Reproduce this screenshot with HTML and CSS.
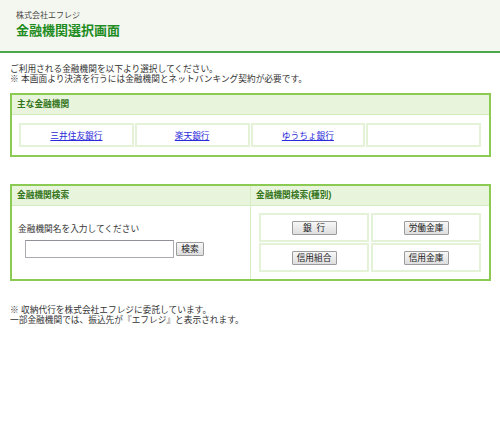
FILE: index.html
```html
<!DOCTYPE html>
<html lang="ja">
<head>
<meta charset="utf-8">
<title>金融機関選択画面</title>
<link rel="stylesheet" href="styles.css">
</head>
<body>
<div class="header">
  <div class="company">株式会社エフレジ</div>
  <h1 class="title">金融機関選択画面</h1>
</div>
<div class="content">
  <p class="intro">ご利用される金融機関を以下より選択してください。<br>※ 本画面より決済を行うには金融機関とネットバンキング契約が必要です。</p>

  <div class="panel panel-main">
    <div class="panel-head">主な金融機関</div>
    <div class="bank-grid">
      <div class="cell"><a href="#">三井住友銀行</a></div>
      <div class="cell"><a href="#">楽天銀行</a></div>
      <div class="cell"><a href="#">ゆうちょ銀行</a></div>
      <div class="cell"></div>
    </div>
  </div>

  <div class="panel panel-search">
    <div class="col col-left">
      <div class="panel-head">金融機関検索</div>
      <div class="search-body">
        <div class="label">金融機関名を入力してください</div>
        <div class="search-row">
          <input class="search-input" type="text">
          <button class="btn btn-search">検索</button>
        </div>
      </div>
    </div>
    <div class="col col-right">
      <div class="panel-head">金融機関検索(種別)</div>
      <div class="type-grid">
        <div class="cell cell-type"><button class="btn btn-type">銀&nbsp;&nbsp;行</button></div>
        <div class="cell cell-type"><button class="btn btn-type">労働金庫</button></div>
        <div class="cell cell-type"><button class="btn btn-type">信用組合</button></div>
        <div class="cell cell-type"><button class="btn btn-type">信用金庫</button></div>
      </div>
    </div>
  </div>

  <p class="note">※ 収納代行を株式会社エフレジに委託しています。<br>一部金融機関では、振込先が『エフレジ』と表示されます。</p>
</div>
</body>
</html>
```

FILE: styles.css
```css
* { box-sizing: border-box; }
body {
  margin: 0;
  background: #ffffff;
  font-family: "Liberation Sans", "Noto Sans CJK JP", sans-serif;
  font-size: 8.7px;
  color: #333333;
}
.header {
  height: 53px;
  background: #f4f7ef;
  border-bottom: 2px solid #4aa84a;
  padding: 10px 0 0 16px;
}
.company {
  font-size: 8px;
  line-height: 11px;
  color: #444444;
}
.title {
  margin: 1px 0 0 0;
  font-size: 13px;
  line-height: 17px;
  font-weight: bold;
  color: #1f8c1f;
}
.content {
  padding: 0 10px;
}
.intro {
  margin: 11px 0 0 0;
  line-height: 10px;
}
.panel {
  border: 2px solid #8ccb53;
  width: 481px;
}
.panel-main {
  margin-top: 9px;
}
.panel-head {
  height: 20px;
  background: #e8f4dc;
  border-bottom: 1px solid #d2eabd;
  color: #347520;
  font-weight: bold;
  font-size: 8.7px;
  line-height: 19px;
  padding-left: 5px;
}
.bank-grid {
  display: grid;
  grid-template-columns: repeat(4, 1fr);
  gap: 1px;
  padding: 8px 8px 8px 7px;
}
.cell {
  height: 24px;
  border: 2px solid #e4f2d7;
  display: flex;
  align-items: center;
  justify-content: center;
}
.cell a {
  color: #2b2bd9;
  text-decoration: underline;
}
.panel-search {
  margin-top: 27px;
  display: grid;
  grid-template-columns: 239px 1fr;
}
.col-left {
  border-right: 1px solid #d6ecc2;
}
.search-body {
  padding: 18px 0 0 6px;
}
.label {
  line-height: 11px;
}
.search-row {
  display: flex;
  align-items: center;
  gap: 2px;
  margin: 5px 0 0 7px;
}
.search-input {
  width: 149px;
  height: 18px;
  border: 1px solid #a9abb0;
  border-top-color: #8f9196;
  margin: 0;
  padding: 0 2px;
  background: #ffffff;
}
.btn {
  font-family: "Liberation Sans", "Noto Sans CJK JP", sans-serif;
  font-size: 8.7px;
  color: #222222;
  height: 14px;
  line-height: 12px;
  padding: 0 4px;
  margin: 0;
  border: 1px solid #9c9c9c;
  border-radius: 1px;
  background: linear-gradient(#f7f7f7, #dedede);
}
.btn-search {
  width: 28px;
  padding: 0;
}
.btn-type {
  width: 45px;
  padding: 0;
}
.type-grid {
  display: grid;
  grid-template-columns: 1fr 1fr;
  gap: 1px 2px;
  padding: 7px 8px 7px 8px;
}
.cell-type {
  height: 29px;
}
.note {
  margin: 24px 0 0 0;
  line-height: 10px;
}
```
